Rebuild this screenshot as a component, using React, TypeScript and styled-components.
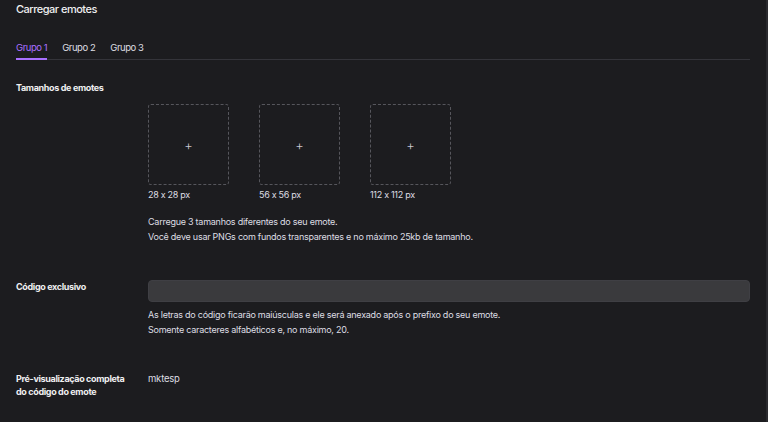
import styled, { createGlobalStyle } from 'styled-components'

const Global = createGlobalStyle`
  html, body {
    margin: 0;
    padding: 0;
    background: #1c1c1f;
  }
  body {
    font-family: Inter, "Noto Sans", "Liberation Sans", sans-serif;
    color: #efeff1;
    -webkit-font-smoothing: antialiased;
  }
`

const Page = styled.div`
  width: 768px;
  height: 422px;
  box-sizing: border-box;
  padding: 2px 16px 0 16px;
  background: #1c1c1f;
  border-right: 2px solid #2a2a2e;
  overflow: hidden;
`

const Title = styled.h2`
  margin: 0;
  font-size: 11px;
  line-height: 15px;
  font-weight: 500;
  letter-spacing: -0.5px;
  color: #efeff1;
`

const Tabs = styled.div`
  display: flex;
  gap: 15px;
  margin-top: 24px;
  border-bottom: 1px solid #34343a;
`

const Tab = styled.div<{ $active?: boolean }>`
  font-size: 9.5px;
  line-height: 14px;
  padding-bottom: 5px;
  letter-spacing: -0.45px;
  color: ${({ $active }) => ($active ? '#a970ff' : '#dedee3')};
  box-shadow: ${({ $active }) => ($active ? 'inset 0 -2px 0 #a970ff' : 'none')};
  margin-bottom: -1px;
`

const Section = styled.div<{ $top: number }>`
  display: grid;
  grid-template-columns: 132px 1fr;
  margin-top: ${({ $top }) => $top}px;
`

const Label = styled.div`
  font-size: 9px;
  line-height: 13px;
  font-weight: 700;
  letter-spacing: -0.35px;
  color: #efeff1;
`

const Content = styled.div<{ $offset?: number }>`
  padding-top: ${({ $offset }) => $offset ?? 0}px;
`

const Sizes = styled.div`
  display: flex;
  gap: 30px;
`

const SizeItem = styled.div`
  display: flex;
  flex-direction: column;
  gap: 3px;
`

const Drop = styled.div`
  width: 81px;
  height: 81px;
  box-sizing: border-box;
  border: 1px dashed #56565c;
  border-radius: 3px;
  display: flex;
  align-items: center;
  justify-content: center;
  color: #c8c8cf;
  font-size: 13px;
  font-weight: 300;
`

const SizeText = styled.div`
  font-size: 9px;
  line-height: 14px;
  letter-spacing: -0.3px;
  color: #dedee3;
`

const Help = styled.p<{ $top: number }>`
  margin: ${({ $top }) => $top}px 0 0 0;
  font-size: 9px;
  line-height: 15px;
  letter-spacing: -0.25px;
  color: #dedee3;
`

const Input = styled.input`
  display: block;
  width: 100%;
  height: 22px;
  box-sizing: border-box;
  background: #3a3a3d;
  border: 1px solid #3f3f44;
  border-radius: 4px;
  outline: none;
  color: #efeff1;
`

const Value = styled.div`
  font-size: 9.5px;
  line-height: 13px;
  letter-spacing: -0.2px;
  color: #dedee3;
`

const sizes = ['28 x 28 px', '56 x 56 px', '112 x 112 px']

export default function App() {
  return (
    <Page>
      <Global />
      <Title>Carregar emotes</Title>
      <Tabs>
        <Tab $active>Grupo 1</Tab>
        <Tab>Grupo 2</Tab>
        <Tab>Grupo 3</Tab>
      </Tabs>

      <Section $top={21}>
        <Label>Tamanhos de emotes</Label>
        <Content $offset={23}>
          <Sizes>
            {sizes.map((s) => (
              <SizeItem key={s}>
                <Drop>+</Drop>
                <SizeText>{s}</SizeText>
              </SizeItem>
            ))}
          </Sizes>
          <Help $top={12}>
            Carregue 3 tamanhos diferentes do seu emote.
            <br />
            Você deve usar PNGs com fundos transparentes e no máximo 25kb de tamanho.
          </Help>
        </Content>
      </Section>

      <Section $top={36}>
        <Label>Código exclusivo</Label>
        <Content>
          <Input type="text" />
          <Help $top={5}>
            As letras do código ficarão maiúsculas e ele será anexado após o prefixo do seu emote.
            <br />
            Somente caracteres alfabéticos e, no máximo, 20.
          </Help>
        </Content>
      </Section>

      <Section $top={35}>
        <Label>
          Pré-visualização completa
          <br />
          do código do emote
        </Label>
        <Content>
          <Value>mktesp</Value>
        </Content>
      </Section>
    </Page>
  )
}
